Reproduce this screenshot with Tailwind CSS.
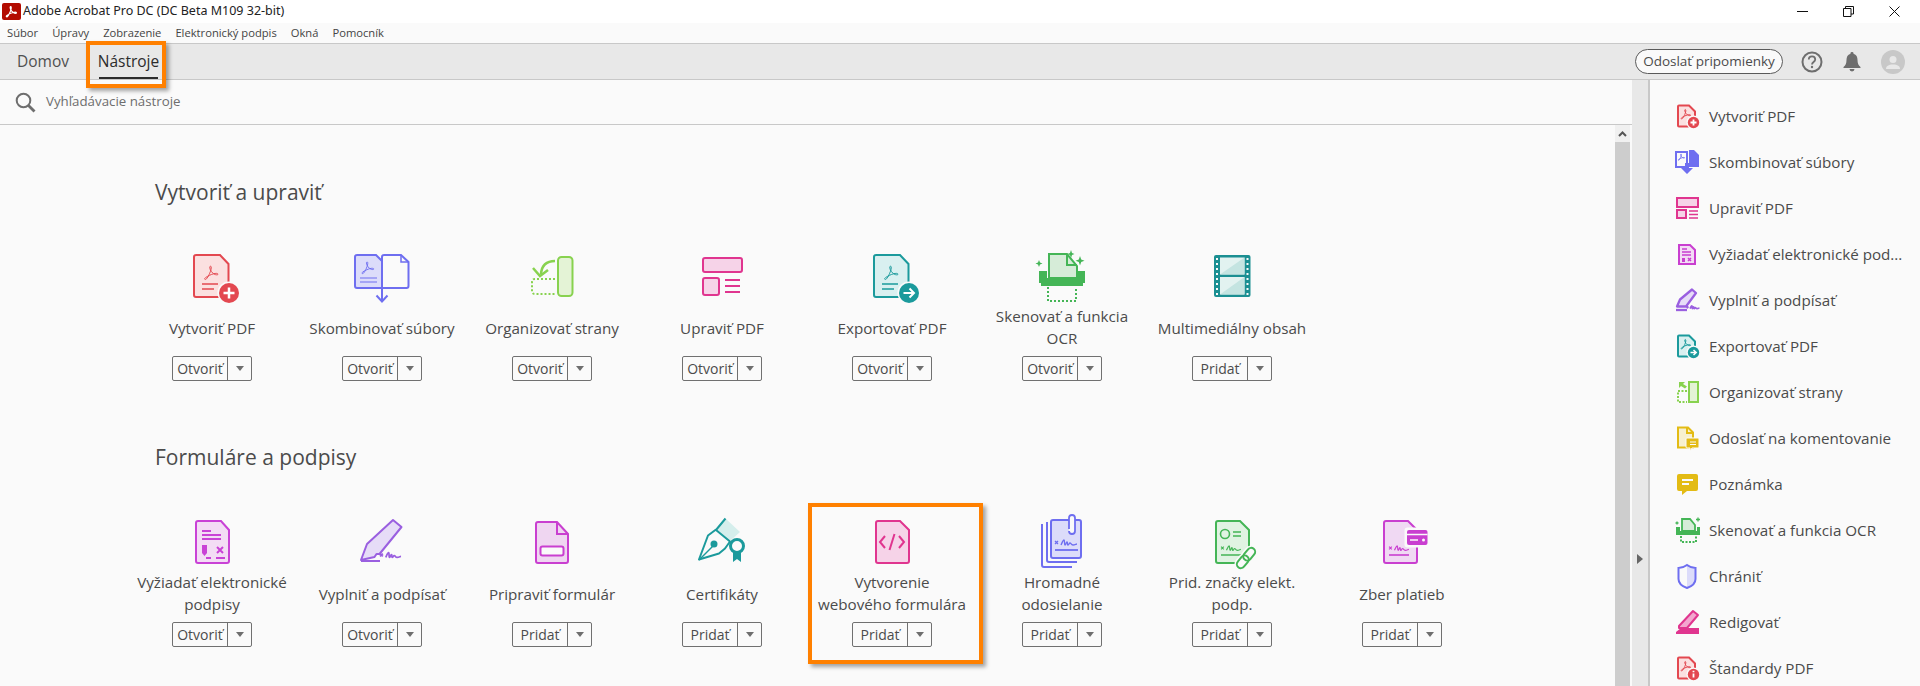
<!DOCTYPE html>
<html lang="sk">
  <head>
    <meta charset="UTF-8" />
    <title>Adobe Acrobat Pro DC</title>
    <script src="https://cdn.jsdelivr.net/npm/@tailwindcss/browser@4"></script>
  </head>
  <body class="relative w-[1920px] h-[686px] overflow-hidden flex flex-col bg-[#fafafa] text-[#4b4b4b] font-['Open_Sans',sans-serif]">
    <!-- shared glyphs -->
    <svg class="hidden">
      <symbol id="acro" viewBox="0 0 24 24">
        <path fill="none" d="M2.5 21.5c2 1.5 4.500-3 7-8.500 1.500-3.500 2.500-7 2-9-.4-1.500-2-1-2 .5 0 4 4 9.500 8 10.500 2 .5 4 .5 3.500-1-.5-1-3-1-6-.2-3.500.9-8 3-11.500 5.500-1 .9-1.500 1.500-1 2.200z" />
      </symbol>
      <symbol id="sig" viewBox="0 0 24 10">
        <path fill="none" d="M1 3l3 3m0-3L1 6M7 7c1-2 2-5 3-5s0 5 1 5 1-3 2-3 0 3 1 3 1-2 2-2 1 2 3 2 3-1 4-1" />
      </symbol>
    </svg>

    <!-- Title bar -->
    <div class="h-[23px] bg-white flex items-center shrink-0">
      <svg class="ml-[2px] w-[19px] h-[17px]" viewBox="0 0 19 17">
        <rect width="19" height="17" rx="2" fill="#b30b00" />
        <use href="#acro" x="3" y="2" width="13" height="13" stroke="#fff" stroke-width="2.200" />
      </svg>
      <span class="ml-[2px] text-[12.500px] text-[#222] font-['Noto_Sans',sans-serif]">Adobe Acrobat Pro DC (DC Beta M109 32-bit)</span>
      <div class="ml-auto flex items-center gap-[35px] pr-[20px]">
        <svg class="w-[11px] h-[11px]" viewBox="0 0 11 11"><path d="M0 5.500h11" stroke="#111" /></svg>
        <svg class="w-[11px] h-[11px]" viewBox="0 0 11 11" fill="none" stroke="#111"><path d="M.5 2.500h7.500v8h-7.500zM2.500 2.500v-2h8v7.500h-2.500" /></svg>
        <svg class="w-[11px] h-[11px]" viewBox="0 0 11 11" stroke="#111"><path d="M.5.5l10 10M10.500.5l-10 10" /></svg>
      </div>
    </div>

    <!-- Menu bar -->
    <nav class="h-[21px] bg-[#fafafa] border-b border-[#c8c8c8] flex items-center gap-[14px] pl-[7px] text-[11.200px] text-[#444] shrink-0">
      <span>Súbor</span>
      <span>Úpravy</span>
      <span>Zobrazenie</span>
      <span>Elektronický podpis</span>
      <span>Okná</span>
      <span>Pomocník</span>
    </nav>

    <!-- Tabs -->
    <header class="h-[36px] bg-[#e8e8e8] border-b border-[#c8c8c8] flex items-stretch shrink-0">
      <div class="w-[99px] flex items-center pl-[17px] text-[15.500px] text-[#505050]">Domov</div>
      <div class="relative w-[59px] flex items-center justify-center whitespace-nowrap text-[15.500px] text-[#2c2c2c]">
        Nástroje
        <div class="absolute left-0 right-0 bottom-0 h-[2px] bg-[#2c2c2c]"></div>
      </div>
      <div class="ml-auto flex items-center pr-[15px]">
        <button class="w-[148px] h-[25px] rounded-full border-[1.500px] border-[#5a5a5a] bg-[#fafafa] text-[13.500px] text-[#4b4b4b]">Odoslať pripomienky</button>
        <svg class="ml-[18px] w-[22px] h-[22px]" viewBox="0 0 22 22">
          <circle cx="11" cy="11" r="9.500" fill="none" stroke="#6e6e6e" stroke-width="2" />
          <path d="M7.800 8.500c0-4.200 6.400-4.200 6.400 0 0 2.500-3.200 2.500-3.200 5" fill="none" stroke="#6e6e6e" stroke-width="1.800" />
          <circle cx="11" cy="16" r="1.200" fill="#6e6e6e" />
        </svg>
        <svg class="ml-[20px] w-[18px] h-[20px]" viewBox="0 0 18 20" fill="#6e6e6e">
          <path d="M9 0a1.500 1.500 0 0 1 1.500 1.700c3 .8 4 3.300 4 6.300 0 3.500 1 5.500 3 7v1h-17v-1c2-1.500 3-3.500 3-7 0-3 1-5.500 4-6.300a1.500 1.500 0 0 1 1.500-1.700z" />
          <path d="M6.500 17h5a2.500 2.500 0 0 1-5 0z" />
        </svg>
        <div class="ml-[20px] w-[24px] h-[24px] rounded-full bg-[#c8c8c8] flex items-center justify-center">
          <svg class="w-[14px] h-[14px]" viewBox="0 0 14 14" fill="#e8e8e8"><circle cx="7" cy="4.500" r="3.500" /><path d="M0 14c0-3 2.500-4.500 7-4.500s7 1.500 7 4.500z" /></svg>
        </div>
      </div>
    </header>

    <div class="flex flex-1 min-h-0">
      <!-- Main column -->
      <main class="w-[1632px] flex flex-col shrink-0">
        <div class="h-[45px] border-b border-[#c8c8c8] flex items-center pl-[15px] shrink-0">
          <svg class="w-[21px] h-[21px]" viewBox="0 0 21 21" fill="none" stroke="#6e6e6e">
            <circle cx="8.500" cy="8.500" r="6.800" stroke-width="2" />
            <path d="M13.500 13.500l6 6" stroke-width="2.800" />
          </svg>
          <span class="ml-[10px] text-[13.300px] text-[#6e6e6e]">Vyhľadávacie nástroje</span>
        </div>
        <div class="flex flex-1 min-h-0 pr-[2px]">
          <div class="flex-1 pl-[127px] pt-[52px] overflow-hidden">
            <h2 class="ml-[28px] h-[30px] leading-[30px] text-[21px] text-[#4b4b4b]">Vytvoriť a upraviť</h2>
            <div class="mt-[47px] flex">
              <!-- Vytvoriť PDF -->
              <div class="w-[170px] flex flex-col items-center">
                <div class="h-[52px]">
                  <svg class="w-[60px] h-[52px] overflow-visible" viewBox="0 0 60 52">
                    <path d="M14 1h24l8.500 9v31a2 2 0 0 1-2 2h-30.500a2 2 0 0 1-2-2v-38a2 2 0 0 1 2-2z" fill="#fbe0e0" stroke="#e34850" stroke-width="2" />
                    <path d="M20 30h16M20 35h12" stroke="#e34850" stroke-width="1.300" />
                    <use href="#acro" x="20" y="10" width="19" height="17" stroke="#e34850" stroke-width="1.400" />
                    <circle cx="47" cy="39" r="11.500" fill="#fafafa" />
                    <circle cx="47" cy="39" r="10" fill="#e34850" />
                    <path d="M41.500 39h11M47 33.500v11" stroke="#fff" stroke-width="2.500" />
                  </svg>
                </div>
                <div class="h-[44px] flex items-center text-center text-[15.200px] leading-[22px]">Vytvoriť PDF</div>
                <div class="mt-[6px] w-[80px] h-[25px] flex rounded-[2px] border border-[#707070] bg-[#fafafa] text-[14px] leading-[23px]">
                  <span class="w-[55px] border-r border-[#707070] text-center">Otvoriť</span>
                  <span class="flex-1 flex items-center justify-center"><span class="border-x-[4px] border-t-[5px] border-x-transparent border-t-[#6e6e6e]"></span></span>
                </div>
              </div>
              <!-- Skombinovať súbory -->
              <div class="w-[170px] flex flex-col items-center">
                <div class="h-[52px]">
                  <svg class="w-[60px] h-[52px] overflow-visible" viewBox="0 0 60 52">
                    <path d="M32 1h17l7.500 7v24a2 2 0 0 1-2 2h-24.500v-31a2 2 0 0 1 2-2z" fill="#fafafa" stroke="#6e6ef0" stroke-width="2" />
                    <path d="M49 1v7h7.500" fill="none" stroke="#6e6ef0" stroke-width="1.500" />
                    <path d="M5 1h19l6 6v27h-25a2 2 0 0 1-2-2v-29a2 2 0 0 1 2-2z" fill="#dcdcfa" stroke="#6e6ef0" stroke-width="2" />
                    <use href="#acro" x="8" y="6" width="16" height="15" stroke="#6e6ef0" stroke-width="1.500" />
                    <path d="M8 24h17M8 28h17" stroke="#6e6ef0" stroke-width="1.200" />
                    <path d="M30 27v20M24.500 41.500l5.500 6 5.500-6" fill="none" stroke="#6e6ef0" stroke-width="2" />
                  </svg>
                </div>
                <div class="h-[44px] flex items-center text-center text-[15.200px] leading-[22px]">Skombinovať súbory</div>
                <div class="mt-[6px] w-[80px] h-[25px] flex rounded-[2px] border border-[#707070] bg-[#fafafa] text-[14px] leading-[23px]">
                  <span class="w-[55px] border-r border-[#707070] text-center">Otvoriť</span>
                  <span class="flex-1 flex items-center justify-center"><span class="border-x-[4px] border-t-[5px] border-x-transparent border-t-[#6e6e6e]"></span></span>
                </div>
              </div>
              <!-- Organizovať strany -->
              <div class="w-[170px] flex flex-col items-center">
                <div class="h-[52px]">
                  <svg class="w-[60px] h-[52px] overflow-visible" viewBox="0 0 60 52" fill="none" stroke="#88d24f">
                    <rect x="36" y="3" width="14.500" height="39" rx="3.500" fill="#e4f3d6" stroke-width="2" />
                    <path d="M33 25h-20q-3 0-3 3v9q0 3 3 3h21" stroke-width="2" stroke-dasharray="2 2" />
                    <path d="M33 7q-13 0-14 13" stroke-width="2.500" />
                    <path d="M11 14l7 8 8-6" stroke-width="2.500" />
                  </svg>
                </div>
                <div class="h-[44px] flex items-center text-center text-[15.200px] leading-[22px]">Organizovať strany</div>
                <div class="mt-[6px] w-[80px] h-[25px] flex rounded-[2px] border border-[#707070] bg-[#fafafa] text-[14px] leading-[23px]">
                  <span class="w-[55px] border-r border-[#707070] text-center">Otvoriť</span>
                  <span class="flex-1 flex items-center justify-center"><span class="border-x-[4px] border-t-[5px] border-x-transparent border-t-[#6e6e6e]"></span></span>
                </div>
              </div>
              <!-- Upraviť PDF -->
              <div class="w-[170px] flex flex-col items-center">
                <div class="h-[52px]">
                  <svg class="w-[60px] h-[52px] overflow-visible" viewBox="0 0 60 52" stroke="#e0358f">
                    <rect x="11" y="4" width="39" height="14" rx="2" fill="#f6d3e8" stroke-width="2" />
                    <rect x="11" y="24" width="16" height="17" rx="2" fill="#f6d3e8" stroke-width="2" />
                    <path d="M33 26h15M33 32h15M33 38h15" stroke-width="2" />
                  </svg>
                </div>
                <div class="h-[44px] flex items-center text-center text-[15.200px] leading-[22px]">Upraviť PDF</div>
                <div class="mt-[6px] w-[80px] h-[25px] flex rounded-[2px] border border-[#707070] bg-[#fafafa] text-[14px] leading-[23px]">
                  <span class="w-[55px] border-r border-[#707070] text-center">Otvoriť</span>
                  <span class="flex-1 flex items-center justify-center"><span class="border-x-[4px] border-t-[5px] border-x-transparent border-t-[#6e6e6e]"></span></span>
                </div>
              </div>
              <!-- Exportovať PDF -->
              <div class="w-[170px] flex flex-col items-center">
                <div class="h-[52px]">
                  <svg class="w-[60px] h-[52px] overflow-visible" viewBox="0 0 60 52">
                    <path d="M14 1h24l8.500 9v31a2 2 0 0 1-2 2h-30.500a2 2 0 0 1-2-2v-38a2 2 0 0 1 2-2z" fill="#d9f0f0" stroke="#1b9a9c" stroke-width="2" />
                    <path d="M20 30h16M20 35h12" stroke="#1b9a9c" stroke-width="1.300" />
                    <use href="#acro" x="20" y="10" width="19" height="17" stroke="#1b9a9c" stroke-width="1.400" />
                    <circle cx="47" cy="39" r="11.500" fill="#fafafa" />
                    <circle cx="47" cy="39" r="10" fill="#1b9a9c" />
                    <path d="M41.500 39h10M47.500 34.500l4.500 4.500-4.500 4.500" fill="none" stroke="#fff" stroke-width="2" />
                  </svg>
                </div>
                <div class="h-[44px] flex items-center text-center text-[15.200px] leading-[22px]">Exportovať PDF</div>
                <div class="mt-[6px] w-[80px] h-[25px] flex rounded-[2px] border border-[#707070] bg-[#fafafa] text-[14px] leading-[23px]">
                  <span class="w-[55px] border-r border-[#707070] text-center">Otvoriť</span>
                  <span class="flex-1 flex items-center justify-center"><span class="border-x-[4px] border-t-[5px] border-x-transparent border-t-[#6e6e6e]"></span></span>
                </div>
              </div>
              <!-- Skenovať a funkcia OCR -->
              <div class="w-[170px] flex flex-col items-center">
                <div class="h-[52px]">
                  <svg class="w-[60px] h-[52px] overflow-visible" viewBox="0 0 60 52" stroke="#44b556">
                    <path d="M17 0h18l10 12v12h-28z" fill="#d6ecd8" stroke-width="2" />
                    <path d="M35 0v11h10" fill="none" stroke-width="2" />
                    <path d="M7 17h8v7h30v-7h8v12h-2v3h-42v-3h-2z" fill="#44b556" stroke="none" />
                    <path d="M16 33v14h28v-14" fill="none" stroke-width="2" stroke-dasharray="2 2" />
                    <path d="M7 6l1 2.500 2.500 1-2.500 1-1 2.500-1-2.500-2.500-1 2.500-1zM39-4l1 3 2.500 1-2.500 1-1 3-1-3-2.500-1 2.500-1zM48 2l1.200 3.500 3.300 1.200-3.300 1.300-1.200 3.500-1.200-3.500-3.300-1.300 3.300-1.200z" fill="#44b556" stroke="none" />
                  </svg>
                </div>
                <div class="h-[44px] pb-[3px] flex items-center text-center text-[15.200px] leading-[22px]">Skenovať a funkcia<br />OCR</div>
                <div class="mt-[6px] w-[80px] h-[25px] flex rounded-[2px] border border-[#707070] bg-[#fafafa] text-[14px] leading-[23px]">
                  <span class="w-[55px] border-r border-[#707070] text-center">Otvoriť</span>
                  <span class="flex-1 flex items-center justify-center"><span class="border-x-[4px] border-t-[5px] border-x-transparent border-t-[#6e6e6e]"></span></span>
                </div>
              </div>
              <!-- Multimediálny obsah -->
              <div class="w-[170px] flex flex-col items-center">
                <div class="h-[52px]">
                  <svg class="w-[60px] h-[52px] overflow-visible" viewBox="0 0 60 52">
                    <rect x="12" y="1" width="36.500" height="42" rx="2" fill="#1b8f92" />
                    <rect x="18" y="3.500" width="24.500" height="17" fill="#e2f2f0" />
                    <rect x="18" y="23" width="24.500" height="17.500" fill="#e2f2f0" />
                    <path d="M42.500 3.500v17h-24.500zM42.500 23v17.500h-24.500z" fill="#c4e4e1" />
                    <path d="M15 4v37M45.500 4v37" stroke="#fafafa" stroke-width="2" stroke-dasharray="2 3" />
                  </svg>
                </div>
                <div class="h-[44px] flex items-center text-center text-[15.200px] leading-[22px]">Multimediálny obsah</div>
                <div class="mt-[6px] w-[80px] h-[25px] flex rounded-[2px] border border-[#707070] bg-[#fafafa] text-[14px] leading-[23px]">
                  <span class="w-[55px] border-r border-[#707070] text-center">Pridať</span>
                  <span class="flex-1 flex items-center justify-center"><span class="border-x-[4px] border-t-[5px] border-x-transparent border-t-[#6e6e6e]"></span></span>
                </div>
              </div>
            </div>

            <h2 class="mt-[61px] ml-[28px] h-[30px] leading-[30px] text-[21px] text-[#4b4b4b]">Formuláre a podpisy</h2>
            <div class="mt-[48px] flex">
              <!-- Vyžiadať elektronické podpisy -->
              <div class="w-[170px] flex flex-col items-center">
                <div class="h-[52px]">
                  <svg class="w-[60px] h-[52px] overflow-visible" viewBox="0 0 60 52" stroke="#c942d6">
                    <path d="M16 1h23l8 9v31a2 2 0 0 1-2 2h-29a2 2 0 0 1-2-2v-38a2 2 0 0 1 2-2z" fill="#f3dcf5" stroke-width="2" />
                    <path d="M20 11h9M20 15h19M20 19h19M24 38h5M34 38h9" stroke-width="1.800" />
                    <path d="M20 25h5v8l-2.500 3-2.500-3z" fill="#c942d6" stroke="none" />
                    <path d="M35 27l6 6m0-6l-6 6" stroke-width="2" />
                  </svg>
                </div>
                <div class="h-[44px] pb-[3px] flex items-center text-center text-[15.200px] leading-[22px]">Vyžiadať elektronické<br />podpisy</div>
                <div class="mt-[6px] w-[80px] h-[25px] flex rounded-[2px] border border-[#707070] bg-[#fafafa] text-[14px] leading-[23px]">
                  <span class="w-[55px] border-r border-[#707070] text-center">Otvoriť</span>
                  <span class="flex-1 flex items-center justify-center"><span class="border-x-[4px] border-t-[5px] border-x-transparent border-t-[#6e6e6e]"></span></span>
                </div>
              </div>
              <!-- Vyplniť a podpísať -->
              <div class="w-[170px] flex flex-col items-center">
                <div class="h-[52px]">
                  <svg class="w-[60px] h-[52px] overflow-visible" viewBox="0 0 60 52" stroke="#9a5fe0">
                    <path d="M41 0l8.500 7-22 27h-3l-2 3-13.500 3 6-16z" fill="#e6dcf7" stroke-width="2" stroke-linejoin="round" />
                    <path d="M9 41h19" stroke-width="2" />
                    <use href="#sig" x="27" y="30" width="23" height="11" stroke-width="1.800" />
                  </svg>
                </div>
                <div class="h-[44px] flex items-center text-center text-[15.200px] leading-[22px]">Vyplniť a podpísať</div>
                <div class="mt-[6px] w-[80px] h-[25px] flex rounded-[2px] border border-[#707070] bg-[#fafafa] text-[14px] leading-[23px]">
                  <span class="w-[55px] border-r border-[#707070] text-center">Otvoriť</span>
                  <span class="flex-1 flex items-center justify-center"><span class="border-x-[4px] border-t-[5px] border-x-transparent border-t-[#6e6e6e]"></span></span>
                </div>
              </div>
              <!-- Pripraviť formulár -->
              <div class="w-[170px] flex flex-col items-center">
                <div class="h-[52px]">
                  <svg class="w-[60px] h-[52px] overflow-visible" viewBox="0 0 60 52" stroke="#c93fd0" stroke-width="2">
                    <path d="M16 2h19l11 12v27a2 2 0 0 1-2 2h-28a2 2 0 0 1-2-2v-37a2 2 0 0 1 2-2z" fill="#efd6f1" />
                    <path d="M35 2v12h11" fill="none" />
                    <rect x="18.500" y="26.500" width="23" height="9" rx="2" fill="#fafafa" />
                  </svg>
                </div>
                <div class="h-[44px] flex items-center text-center text-[15.200px] leading-[22px]">Pripraviť formulár</div>
                <div class="mt-[6px] w-[80px] h-[25px] flex rounded-[2px] border border-[#707070] bg-[#fafafa] text-[14px] leading-[23px]">
                  <span class="w-[55px] border-r border-[#707070] text-center">Pridať</span>
                  <span class="flex-1 flex items-center justify-center"><span class="border-x-[4px] border-t-[5px] border-x-transparent border-t-[#6e6e6e]"></span></span>
                </div>
              </div>
              <!-- Certifikáty -->
              <div class="w-[170px] flex flex-col items-center">
                <div class="h-[52px]">
                  <svg class="w-[60px] h-[52px] overflow-visible" viewBox="0 0 60 52" fill="none" stroke="#1b9a9c" stroke-width="2">
                    <path d="M33.500-1.500l14.500 13.500-10 9-13.500-11.500z" fill="#d5eeec" stroke="none" />
                    <path d="M33.500-1.500l-9.500 11.500 14 11.500-5 7-6 5-20 6 9-24 8-6" stroke-linejoin="round" />
                    <path d="M7 40l14-14" stroke-width="1.500" />
                    <circle cx="22" cy="24" r="2.500" fill="#1b9a9c" />
                    <circle cx="45" cy="26" r="6.500" fill="#fafafa" stroke-width="3" />
                    <path d="M41 33v9l4-3 4 3v-9z" fill="#1b9a9c" stroke="none" />
                  </svg>
                </div>
                <div class="h-[44px] flex items-center text-center text-[15.200px] leading-[22px]">Certifikáty</div>
                <div class="mt-[6px] w-[80px] h-[25px] flex rounded-[2px] border border-[#707070] bg-[#fafafa] text-[14px] leading-[23px]">
                  <span class="w-[55px] border-r border-[#707070] text-center">Pridať</span>
                  <span class="flex-1 flex items-center justify-center"><span class="border-x-[4px] border-t-[5px] border-x-transparent border-t-[#6e6e6e]"></span></span>
                </div>
              </div>
              <!-- Vytvorenie webového formulára -->
              <div class="w-[170px] flex flex-col items-center">
                <div class="h-[52px]">
                  <svg class="w-[60px] h-[52px] overflow-visible" viewBox="0 0 60 52" stroke="#e0358f">
                    <path d="M16 1h22l9 9v31a2 2 0 0 1-2 2h-29a2 2 0 0 1-2-2v-38a2 2 0 0 1 2-2z" fill="#f6d3e8" stroke-width="2" />
                    <path d="M23 16l-5 6 5 6M37 16l5 6-5 6M32.500 14l-5 16" fill="none" stroke-width="2" />
                  </svg>
                </div>
                <div class="h-[44px] pb-[3px] flex items-center text-center text-[15.200px] leading-[22px]">Vytvorenie<br />webového formulára</div>
                <div class="mt-[6px] w-[80px] h-[25px] flex rounded-[2px] border border-[#707070] bg-[#fafafa] text-[14px] leading-[23px]">
                  <span class="w-[55px] border-r border-[#707070] text-center">Pridať</span>
                  <span class="flex-1 flex items-center justify-center"><span class="border-x-[4px] border-t-[5px] border-x-transparent border-t-[#6e6e6e]"></span></span>
                </div>
              </div>
              <!-- Hromadné odosielanie -->
              <div class="w-[170px] flex flex-col items-center">
                <div class="h-[52px]">
                  <svg class="w-[60px] h-[52px] overflow-visible" viewBox="0 0 60 52" fill="none" stroke="#6e6ef0">
                    <path d="M10 4v41a2 2 0 0 0 2 2h28" stroke-width="2" />
                    <path d="M15 2v38a2 2 0 0 0 2 2h28" stroke-width="2" />
                    <rect x="19" y="0" width="30" height="38" rx="2" fill="#dcdcfa" stroke-width="2" />
                    <path d="M37 9v-11a3 3 0 0 1 6 0v13a3 3 0 0 1-6 0" fill="#fafafa" stroke-width="1.800" />
                    <use href="#sig" x="22" y="18" width="24" height="10" stroke-width="1.300" />
                    <path d="M23 30h23" stroke-width="1.800" />
                  </svg>
                </div>
                <div class="h-[44px] pb-[3px] flex items-center text-center text-[15.200px] leading-[22px]">Hromadné<br />odosielanie</div>
                <div class="mt-[6px] w-[80px] h-[25px] flex rounded-[2px] border border-[#707070] bg-[#fafafa] text-[14px] leading-[23px]">
                  <span class="w-[55px] border-r border-[#707070] text-center">Pridať</span>
                  <span class="flex-1 flex items-center justify-center"><span class="border-x-[4px] border-t-[5px] border-x-transparent border-t-[#6e6e6e]"></span></span>
                </div>
              </div>
              <!-- Prid. značky elekt. podp. -->
              <div class="w-[170px] flex flex-col items-center">
                <div class="h-[52px]">
                  <svg class="w-[60px] h-[52px] overflow-visible" viewBox="0 0 60 52" fill="none" stroke="#44b556">
                    <path d="M16 1h22l9 9v31a2 2 0 0 1-2 2h-29a2 2 0 0 1-2-2v-38a2 2 0 0 1 2-2z" fill="#e0f3e2" stroke-width="2" />
                    <circle cx="23" cy="14" r="4.500" stroke-width="1.600" />
                    <path d="M31 12h8M31 16h8M19 35h20" stroke-width="1.600" />
                    <use href="#sig" x="18" y="24" width="22" height="9" stroke-width="1.300" />
                    <g transform="rotate(40 44 38)">
                      <rect x="40" y="26" width="8" height="14" rx="4" fill="#fafafa" stroke="#fafafa" stroke-width="5" />
                      <rect x="40" y="36" width="8" height="14" rx="4" fill="#fafafa" stroke="#fafafa" stroke-width="5" />
                      <rect x="40" y="26" width="8" height="14" rx="4" stroke-width="2" />
                      <rect x="40" y="36" width="8" height="14" rx="4" stroke-width="2" />
                    </g>
                  </svg>
                </div>
                <div class="h-[44px] pb-[3px] flex items-center text-center text-[15.200px] leading-[22px]">Prid. značky elekt.<br />podp.</div>
                <div class="mt-[6px] w-[80px] h-[25px] flex rounded-[2px] border border-[#707070] bg-[#fafafa] text-[14px] leading-[23px]">
                  <span class="w-[55px] border-r border-[#707070] text-center">Pridať</span>
                  <span class="flex-1 flex items-center justify-center"><span class="border-x-[4px] border-t-[5px] border-x-transparent border-t-[#6e6e6e]"></span></span>
                </div>
              </div>
              <!-- Zber platieb -->
              <div class="w-[170px] flex flex-col items-center">
                <div class="h-[52px]">
                  <svg class="w-[60px] h-[52px] overflow-visible" viewBox="0 0 60 52" stroke="#c93fd0">
                    <path d="M14 1h22l9 9v31a2 2 0 0 1-2 2h-29a2 2 0 0 1-2-2v-38a2 2 0 0 1 2-2z" fill="#f0d9f3" stroke-width="2" />
                    <use href="#sig" x="16" y="24" width="22" height="9" fill="none" stroke-width="1.300" />
                    <path d="M17 35h20" stroke-width="1.600" />
                    <rect x="32.500" y="7.500" width="25" height="20" rx="3" fill="#fafafa" stroke="none" />
                    <rect x="35" y="10" width="20.500" height="15" rx="2" fill="#c93fd0" stroke="none" />
                    <path d="M35 14.500h20.500" stroke="#fafafa" stroke-width="1.500" />
                    <path d="M38 20h8" stroke="#fafafa" stroke-width="1.500" />
                    <circle cx="51.500" cy="20" r="1.500" fill="#fafafa" stroke="none" />
                  </svg>
                </div>
                <div class="h-[44px] flex items-center text-center text-[15.200px] leading-[22px]">Zber platieb</div>
                <div class="mt-[6px] w-[80px] h-[25px] flex rounded-[2px] border border-[#707070] bg-[#fafafa] text-[14px] leading-[23px]">
                  <span class="w-[55px] border-r border-[#707070] text-center">Pridať</span>
                  <span class="flex-1 flex items-center justify-center"><span class="border-x-[4px] border-t-[5px] border-x-transparent border-t-[#6e6e6e]"></span></span>
                </div>
              </div>
            </div>
          </div>
          <!-- Scrollbar -->
          <div class="w-[15px] flex flex-col shrink-0 bg-[#f0f0f0]">
            <div class="h-[17px] flex items-center justify-center">
              <svg class="w-[9px] h-[6px]" viewBox="0 0 9 6" fill="none" stroke="#555" stroke-width="2"><path d="M1 5l3.500-3.500 3.500 3.500" /></svg>
            </div>
            <div class="flex-1 bg-[#cdcdcd]"></div>
          </div>
        </div>
      </main>

      <!-- Collapse strip -->
      <div class="w-[18px] bg-[#e8e8e8] border-r-2 border-[#c8c8c8] flex items-center justify-center shrink-0 pt-[352px]">
        <div class="border-y-[5px] border-l-[6px] border-y-transparent border-l-[#666]"></div>
      </div>

      <!-- Right panel -->
      <aside class="flex-1 pt-[13px] pl-[24px] text-[15.200px] overflow-hidden">
        <div class="h-[46px] flex items-center gap-[7px]">
          <svg class="w-[28px] h-[28px] overflow-visible" viewBox="0 0 28 28">
            <path d="M5 3.500h10l6 6v14a1 1 0 0 1-1 1h-15a1 1 0 0 1-1-1v-19a1 1 0 0 1 1-1z" fill="#fbe0e0" stroke="#e34850" stroke-width="2" />
            <use href="#acro" x="6" y="6" width="12" height="12" stroke="#e34850" stroke-width="2" />
            <circle cx="19.500" cy="20.500" r="7" fill="#fafafa" />
            <circle cx="19.500" cy="20.500" r="5.700" fill="#e34850" />
            <path d="M16.500 20.500h6M19.500 17.500v6" stroke="#fff" stroke-width="1.800" />
          </svg>
          <span>Vytvoriť PDF</span>
        </div>
        <div class="h-[46px] flex items-center gap-[7px]">
          <svg class="w-[28px] h-[28px] overflow-visible" viewBox="0 0 28 28">
            <path d="M2 4h11v15h-11z" fill="#fafafa" stroke="#6e6ef0" stroke-width="2" />
            <use href="#acro" x="3.500" y="5" width="8" height="8" stroke="#6e6ef0" stroke-width="2.500" />
            <path d="M15 2h5l5 5v12h-10z" fill="#6e6ef0" />
            <path d="M11 15h4v5h4l-6 6-6-6h4z" fill="#6e6ef0" />
          </svg>
          <span>Skombinovať súbory</span>
        </div>
        <div class="h-[46px] flex items-center gap-[7px]">
          <svg class="w-[28px] h-[28px] overflow-visible" viewBox="0 0 28 28" stroke="#e0358f" stroke-width="2">
            <rect x="3" y="4" width="21" height="9" fill="#f6d3e8" />
            <rect x="3" y="16" width="9" height="8" fill="#f6d3e8" />
            <path d="M15 17h9M15 20.500h9M15 24h9" stroke-width="1.300" />
          </svg>
          <span>Upraviť PDF</span>
        </div>
        <div class="h-[46px] flex items-center gap-[7px]">
          <svg class="w-[28px] h-[28px] overflow-visible" viewBox="0 0 28 28" stroke="#c93fd0">
            <path d="M5 5h11l5 5v14h-16z" fill="#f3dcf5" stroke-width="2" />
            <path d="M8 9h5M8 12h9M8 15h9" stroke-width="1.300" />
            <path d="M8 18h3v4h-3z" fill="#c93fd0" stroke="none" />
            <path d="M14 18l3 3m0-3l-3 3" stroke-width="1.500" />
          </svg>
          <span>Vyžiadať elektronické pod...</span>
        </div>
        <div class="h-[46px] flex items-center gap-[7px]">
          <svg class="w-[28px] h-[28px] overflow-visible" viewBox="0 0 28 28" stroke="#9a5fe0">
            <path d="M18 3.500l4 3.500-10 13.500h-9l3-7z" fill="#e6dcf7" stroke-width="2.300" stroke-linejoin="round" />
            <path d="M2 24h11" stroke-width="2.300" />
            <use href="#sig" x="12" y="18" width="14" height="7" stroke-width="3" />
          </svg>
          <span>Vyplniť a podpísať</span>
        </div>
        <div class="h-[46px] flex items-center gap-[7px]">
          <svg class="w-[28px] h-[28px] overflow-visible" viewBox="0 0 28 28">
            <path d="M5 3.500h10l6 6v14a1 1 0 0 1-1 1h-15a1 1 0 0 1-1-1v-19a1 1 0 0 1 1-1z" fill="#d9f0f0" stroke="#1b9a9c" stroke-width="2" />
            <use href="#acro" x="6" y="6" width="12" height="12" stroke="#1b9a9c" stroke-width="2" />
            <circle cx="19.500" cy="20.500" r="7" fill="#fafafa" />
            <circle cx="19.500" cy="20.500" r="5.700" fill="#1b9a9c" />
            <path d="M16.500 20.500h5.500M19.500 18l2.700 2.500-2.700 2.500" fill="none" stroke="#fff" stroke-width="1.500" />
          </svg>
          <span>Exportovať PDF</span>
        </div>
        <div class="h-[46px] flex items-center gap-[7px]">
          <svg class="w-[28px] h-[28px] overflow-visible" viewBox="0 0 28 28" fill="none" stroke="#88d24f" stroke-width="2">
            <rect x="15" y="4" width="9" height="20" fill="#e4f3d6" />
            <path d="M13 13h-9v11h9" stroke-dasharray="2 1.500" />
            <path d="M5 4l6 0-2 2 4 2.500-2 2-4-2.500-2 2z" fill="#88d24f" stroke="none" />
          </svg>
          <span>Organizovať strany</span>
        </div>
        <div class="h-[46px] flex items-center gap-[7px]">
          <svg class="w-[28px] h-[28px] overflow-visible" viewBox="0 0 28 28">
            <path d="M4 3.500h10l5 5v15h-15z" fill="#f7f0cf" stroke="#e3bb14" stroke-width="2" />
            <path d="M13 3.500v5.500h6" fill="none" stroke="#e3bb14" stroke-width="2" />
            <path d="M13 14h11a1 1 0 0 1 1 1v8a1 1 0 0 1-1 1h-6l-2 3v-3h-3a1 1 0 0 1-1-1v-8a1 1 0 0 1 1-1z" fill="#e3bb14" stroke="#fafafa" stroke-width="1" />
            <path d="M16 18h6M16 20.500h6" stroke="#fafafa" stroke-width="1" />
          </svg>
          <span>Odoslať na komentovanie</span>
        </div>
        <div class="h-[46px] flex items-center gap-[7px]">
          <svg class="w-[28px] h-[28px] overflow-visible" viewBox="0 0 28 28">
            <path d="M5 4h17a2 2 0 0 1 2 2v13a2 2 0 0 1-2 2h-9l-5 4v-4h-3a2 2 0 0 1-2-2v-13a2 2 0 0 1 2-2z" fill="#e3bb14" />
            <path d="M8 10h11M8 14h7" stroke="#fafafa" stroke-width="1.800" />
          </svg>
          <span>Poznámka</span>
        </div>
        <div class="h-[46px] flex items-center gap-[7px]">
          <svg class="w-[28px] h-[28px] overflow-visible" viewBox="0 0 28 28" stroke="#44b556">
            <path d="M8 3h8l5 6v6h-13z" fill="#d6ecd8" stroke-width="1.800" />
            <path d="M2 11h4v4h17v-4h3v8h-24z" fill="#44b556" stroke="none" />
            <path d="M7 20v6h15v-6" fill="none" stroke-width="2" stroke-dasharray="2 1.500" />
            <path d="M24 1.500v4M22 3.500h4M3 5.500v3M1.500 7h3" stroke-width="1.300" />
          </svg>
          <span>Skenovať a funkcia OCR</span>
        </div>
        <div class="h-[46px] flex items-center gap-[7px]">
          <svg class="w-[28px] h-[28px] overflow-visible" viewBox="0 0 28 28">
            <path d="M13 3q4 3 8.500 3v11q0 6-8.500 9z" fill="#dcdcfa" />
            <path d="M13 3q4 3 8.500 3v11q0 6-8.500 9q-8.500-3-8.500-9v-11q4.500 0 8.500-3z" fill="none" stroke="#6e6ef0" stroke-width="2" />
          </svg>
          <span>Chrániť</span>
        </div>
        <div class="h-[46px] flex items-center gap-[7px]">
          <svg class="w-[28px] h-[28px] overflow-visible" viewBox="0 0 28 28">
            <path d="M19 3l5 4-11 13h-8v-2z" fill="#f3a6cf" stroke="#e0358f" stroke-width="2" stroke-linejoin="round" />
            <path d="M2 24l5-4h18v6h-23z" fill="#e0358f" />
          </svg>
          <span>Redigovať</span>
        </div>
        <div class="h-[46px] flex items-center gap-[7px]">
          <svg class="w-[28px] h-[28px] overflow-visible" viewBox="0 0 28 28">
            <path d="M5 3.500h10l6 6v14a1 1 0 0 1-1 1h-15a1 1 0 0 1-1-1v-19a1 1 0 0 1 1-1z" fill="#fbe0e0" stroke="#e34850" stroke-width="2" />
            <use href="#acro" x="6" y="6" width="12" height="12" stroke="#e34850" stroke-width="2" />
            <circle cx="19.500" cy="20.500" r="7" fill="#fafafa" />
            <circle cx="19.500" cy="20.500" r="5.700" fill="#e34850" />
            <path d="M19.500 19.500v4M19.500 16.800v1.500" stroke="#fff" stroke-width="1.800" />
          </svg>
          <span>Štandardy PDF</span>
        </div>
      </aside>
    </div>

    <!-- Callout frames drawn over the screenshot -->
    <div class="absolute left-[86px] top-[41px] w-[80px] h-[47px] border-[4px] border-[#ff8000] shadow-[3px_3px_4px_rgba(0,0,0,0.35)]"></div>
    <div class="absolute left-[808px] top-[503px] w-[175px] h-[161px] border-[4px] border-[#ff8000] shadow-[3px_3px_4px_rgba(0,0,0,0.35)]"></div>
  </body>
</html>
